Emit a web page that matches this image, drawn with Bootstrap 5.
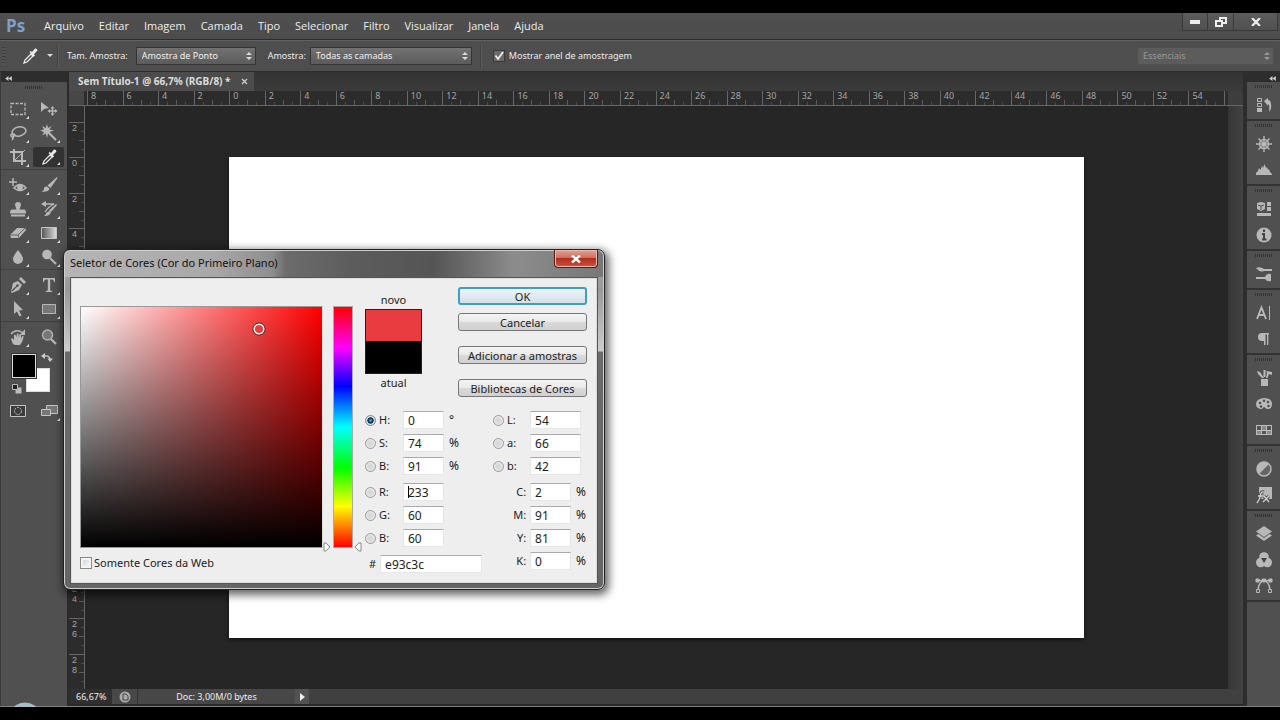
<!DOCTYPE html>
<html lang="pt-BR">
<head>
<meta charset="utf-8">
<meta name="viewport" content="width=device-width, initial-scale=1">
<title>Sem Título-1</title>
<link href="https://cdn.jsdelivr.net/npm/bootstrap@5.3.0/dist/css/bootstrap.min.css" rel="stylesheet">
<style>
body{background:#000;color:#dcdcdc;font:11px/14px "Noto Sans","Open Sans",sans-serif;padding:13px 0}
svg{display:block}
button,input,select{font:inherit;color:inherit}
.app{background:#4f4f4f;border-bottom:1px solid #808080}
.menus{height:27px;background:linear-gradient(#505050,#4c4c4c);border-bottom:1px solid #2c2c2c;padding-left:6px}
.logo-ps{color:#7d9fcc;font:bold 17px/22px "Open Sans",sans-serif;width:30px}
.menu-list{gap:15px}
.menu-link{color:#ececec;text-decoration:none;font:11px/16px "Open Sans",sans-serif}
.win-set{padding-right:2px}
.win-btn{background:linear-gradient(#5c5c5c,#505050);border:1px solid #3a3a3a;border-top:0;height:18px;width:26px;padding:0;display:grid;place-items:center}
.win-btn+.win-btn{border-left:0}
.win-btn.wide{width:44px}
.opts{height:32px;background:#4e4e4e;border-top:1px solid #626262;border-bottom:1px solid #2c2c2c;padding:0 6px 1px 2px;font-size:9px;color:#ececec}
.v-grip{width:3px;height:18px;background:repeating-linear-gradient(#3a3a3a 0 1px,#555 1px 3px)}
.v-line{width:2px;height:22px;background:#424242;border-right:1px solid #5a5a5a}
.drop{appearance:none;height:18px;border:1px solid #353535;border-radius:1px;padding:0 14px 0 5px;line-height:14px;color:#f0f0f0;background:url("data:image/svg+xml,%3Csvg xmlns='http://www.w3.org/2000/svg' width='6' height='10'%3E%3Cpath d='M3 1l3 3H0zM3 9l3-3H0z' fill='%23ddd'/%3E%3C/svg%3E") no-repeat right 3px center,linear-gradient(#727272,#5b5b5b)}
.drop-a{width:120px}.drop-b{width:162px}.drop-c{width:137px;color:#999;border-color:#505050;background:url("data:image/svg+xml,%3Csvg xmlns='http://www.w3.org/2000/svg' width='6' height='10'%3E%3Cpath d='M3 1l3 3H0zM3 9l3-3H0z' fill='%23999'/%3E%3C/svg%3E") no-repeat right 3px center,#5c5c5c}
.ring-check{appearance:none;width:12px;height:12px;margin:0 0 0 3px;border:1px solid #3a3a3a;background:#6a6a6a}
.ring-check:checked{background:url("data:image/svg+xml,%3Csvg xmlns='http://www.w3.org/2000/svg' viewBox='0 0 10 10'%3E%3Cpath d='M1.5 4.5L4 8l5-7' fill='none' stroke='%23eee' stroke-width='1.8'/%3E%3C/svg%3E"),#6a6a6a}
.tools{width:67px;border-left:1px solid #3a3a3a;background:#505050}
.dock-head{height:10px;background:#2d2d2d;color:#cfcfcf}
.h-grip{width:18px;height:3px;margin:0 auto;background:repeating-linear-gradient(90deg,#333 0 1px,#505050 1px 2px)}
.tool-grid{display:grid;grid-template-columns:1fr 1fr;padding:0 3px 0 1px;border-bottom:1px solid #414141;margin-bottom:3px}
.tool{position:relative;height:24px;padding:0;border:0;background:none;color:#b8b8b8;display:grid;place-items:center}
.tool.more::after{content:"";position:absolute;right:4px;bottom:2px;width:0;height:0;border-left:3px solid transparent;border-bottom:3px solid #ddd}
.tool.on{background:#323232;color:#e6e6e6;height:20px;align-self:center;border-radius:2px}
.swatches{position:relative;height:46px}
.sw{position:absolute;width:24px;height:24px;border:1px solid #ddd}
.sw-front{left:11px;top:1px;background:#000;outline:1px solid #333;z-index:1}
.sw-back{left:25px;top:15px;background:#fff}
.sw-swap{position:absolute;left:40px;top:0}.sw-reset{position:absolute;left:10px;top:30px}
.doc-wrap{border-left:2px solid #2a2a2a;border-right:4px solid #2d2d2d;background:#3a3a3a}
.doc-tabs{height:19px;background:linear-gradient(#333,#3b3b3b)}
.doc-tab{background:#4c4c4c;font:bold 10px/18px "Noto Sans",sans-serif;padding:0 6px 0 9px}
.tab-x{border:0;background:none;padding:0 0 0 2px}
.h-ruler,.v-ruler{background:#2c2c2c;color:#a6a6a6;font:9px/10px "Noto Sans",sans-serif}
.mark-cell{flex:1 1 0}
.h-ruler{height:15px;border-bottom:1px solid #666}
.h-ruler .corner{width:15px;background:#474747;margin-right:3px}
.h-ruler .mark-cell{border-left:1px solid #666;padding-left:3px;min-width:0;height:14px;background:linear-gradient(#5c5c5c,#5c5c5c) 17px 100%/1px 5px no-repeat,linear-gradient(#4c4c4c,#4c4c4c) 8px 100%/1px 3px no-repeat,linear-gradient(#4c4c4c,#4c4c4c) 26px 100%/1px 3px no-repeat}
.h-ruler .tail{width:4px;border-left:1px solid #666}
.h-end{width:15px;background:#3d3d3d}
.v-ruler{width:16px;padding-top:16px;border-right:1px solid #666;font-family:"Liberation Sans",sans-serif}
.v-ruler .mark-cell{border-top:1px solid #666;min-height:0;width:15px;padding-left:3px;overflow:hidden;background:linear-gradient(#5c5c5c,#5c5c5c) 100% 17px/5px 1px no-repeat,linear-gradient(#4c4c4c,#4c4c4c) 100% 8px/3px 1px no-repeat,linear-gradient(#4c4c4c,#4c4c4c) 100% 26px/3px 1px no-repeat}
.stage{background:#262626}
.artboard{background:#fff;width:855px;aspect-ratio:16/9;flex:none;box-shadow:0 2px 4px #0008}
.v-scroll{width:15px;background:linear-gradient(90deg,#363636,#434343)}
.status{height:15px;background:#404040;font-size:9px;line-height:16px;color:#ececec}
.status .zoom{width:43px;background:#2f2f2f;padding-left:7px}
.status .ico{width:25px;background:#484848}
.status .doc-size{width:158px;background:#474747;border-left:1px solid #333}
.status .arrow{width:14px;background:#525252}
.app-foot{height:2px;background:#2a2a2a}
.panels{width:33px;background:#505050}
.panel-set{padding:3px 0 1px;border-bottom:2px solid #333}
.panel-set .h-grip{margin-bottom:4px}
.panel-btn{display:grid;place-items:center;width:100%;height:26px;padding:0;border:0;background:none;color:#b8b8b8}
.app-orb{position:absolute;left:12px;bottom:13px;width:26px;height:5px;overflow:hidden}
/* floating colour picker window */
.picker{position:absolute;left:63px;top:249px;width:542px;color:#222;font-size:11px;border:1px solid #222;border-radius:7px;padding:0 6px 5px;box-shadow:inset 0 0 0 1px #cfcfcf,2px 3px 9px 2px #0009;background:linear-gradient(90deg,#b5b5b5 0,#a8a8a8 150px,#8e8e8e 208px,#6c6c6c 222px,#5c5c5c 290px,#555 370px,#666 395px,#8c8c8c 450px,#777 540px) 0 0/100% 27px no-repeat,linear-gradient(#a9a9a9 0,#999 40px,#ccc 101px,#6a6a6a 102px,#666)}
.picker-title{height:27px}
.picker-title h1{font:11px/25px "Noto Sans",sans-serif;margin:0;color:#111}
.picker-x{width:44px;height:18px;border:1px solid #5a1a14;border-top:0;border-radius:0 0 4px 4px;padding:0;background:linear-gradient(#e0a196 0,#d0705f 45%,#b32d1d 50%,#c95440);display:grid;place-items:center;box-shadow:inset 0 0 0 1px #e9b9b0}
.picker-body{background:#eee;border:1px solid #555;outline:1px solid #ddd;outline-offset:-2px;height:307px;padding:9px 10px 0 9px}
.plane{width:243px;height:242px;margin-top:19px;border:1px solid #999;border-right-color:#ddd;background:linear-gradient(transparent,#000),linear-gradient(90deg,#fff,#f00)}
.plane-dot{position:absolute;left:74%;top:9%;transform:translate(-50%,-50%)}
.hue{width:20px;height:242px;margin:19px 0 0 10px;border:1px solid #aaa;background:linear-gradient(#f00,#f0f 17%,#00f 33%,#0ff 50%,#0f0 67%,#ff0 83%,#f00)}
.hue-l,.hue-r{position:absolute;bottom:-5px}.hue-l{left:-11px}.hue-r{right:-10px}
.web{height:14px;margin-top:8px;gap:2px}
.box{appearance:none;width:12px;height:12px;margin:0;border:1px solid #8a8a8a;background:linear-gradient(135deg,#ccc,#fff);box-shadow:inset 0 0 0 2px #f4f4f4}
.dot{appearance:none;width:11px;height:11px;margin:0;border:1px solid #9b9b9b;border-radius:50%;background:radial-gradient(#d8d8d8 30%,#f4f4f4)}
.dot:checked{border-color:#789;background:radial-gradient(circle at 50% 50%,#5cc 0,#146 30%,#135 45%,#dde 55%)}
.right-pane{padding-left:12px}
.top-row{margin-bottom:14px}
.cap-line{line-height:18px}
.preview{width:57px;height:65px;border:1px solid #222;background:linear-gradient(#e93c40 50%,#000 50%)}
.act{width:129px;height:18px;padding:0;border:1px solid #777;border-radius:3px;background:linear-gradient(#f4f4f4,#e9e9e9 50%,#dadada 51%,#d0d0d0);line-height:15px}
.act.ok{border:2px solid #3c9fc4;line-height:13px;background:linear-gradient(#eef4f8,#d5e0e8)}
.acts{gap:15px}
.fields{font-size:12px}
.fields label{font-size:11px}
.col-r{margin-left:11px}
.lines{display:grid;gap:5px}
.line-l,.line-r{display:grid;height:18px;align-items:center}
.line-l{grid-template-columns:14px 24px 41px 1fr}
.line-r{grid-template-columns:14px 23px 51px}
.line-c{display:grid;height:18px;align-items:center;grid-template-columns:33px 41px 1fr;column-gap:4px}
.line-c .unit{padding-left:1px}
.val{width:100%;height:18px;min-width:0;border:1px solid #e6e6e6;border-top-color:#aaa;background:#fff;padding:0 0 0 4px;line-height:16px}
.val.caret{background:linear-gradient(#000,#000) 4px 2px/1px 12px no-repeat,#fff}
.unit{padding-left:5px}
.hex{height:18px;margin-top:8px;padding-left:4px}
.hex .val{width:102px}
</style>
</head>
<body class="vh-100 overflow-hidden">
<svg width="0" height="0" class="position-absolute">
<defs>
<symbol id="pip" viewBox="0 0 18 18"><path d="M3 16l1-3 6-6 2 2-6 6z" fill="none" stroke="currentColor" stroke-width="1.3"/><path d="M8.500 5l1-1 1.500 1L14 1.500q2-.5 2.500 2L13 7l1 1.500-1.200 1.200z" fill="currentColor"/></symbol>
<symbol id="back" viewBox="0 0 8 6"><path d="M4 0v6L0 3zM8 0v6L4 3z" fill="currentColor"/></symbol>
</defs>
</svg>

<main class="app h-100 d-flex flex-column">
<header class="menus d-flex align-items-center">
  <span class="logo-ps">Ps</span>
  <nav class="menu-list d-flex ps-2">
    <a class="menu-link" href="#">Arquivo</a><a class="menu-link" href="#">Editar</a><a class="menu-link" href="#">Imagem</a><a class="menu-link" href="#">Camada</a><a class="menu-link" href="#">Tipo</a><a class="menu-link" href="#">Selecionar</a><a class="menu-link" href="#">Filtro</a><a class="menu-link" href="#">Visualizar</a><a class="menu-link" href="#">Janela</a><a class="menu-link" href="#">Ajuda</a>
  </nav>
  <div class="win-set d-flex ms-auto align-self-start">
    <button class="win-btn" aria-label="Minimizar"><svg width="10" height="4"><path d="M0 0h10v4H0z" fill="#eee"/></svg></button>
    <button class="win-btn" aria-label="Restaurar"><svg width="12" height="10" fill="none" stroke="#eee" stroke-width="2"><path d="M5 3V1h6v5H8"/><path d="M1 4h6v5H1z"/></svg></button>
    <button class="win-btn wide" aria-label="Fechar"><svg width="10" height="8" stroke="#eee" stroke-width="2.200"><path d="M1 0l8 8M9 0L1 8"/></svg></button>
  </div>
</header>

<section class="opts d-flex align-items-center">
  <span class="v-grip"></span>
  <svg width="18" height="18" class="ms-3 flex-shrink-0"><use href="#pip"/></svg>
  <svg width="6" height="3" class="ms-2"><path d="M0 0h6L3 3z" fill="#ddd"/></svg>
  <span class="v-line ms-1"></span>
  <label for="size" class="ms-2 me-2">Tam. Amostra:</label>
  <select id="size" class="drop drop-a"><option>Amostra de Ponto</option></select>
  <label for="src" class="ms-2 me-1 ps-1">Amostra:</label>
  <select id="src" class="drop drop-b"><option>Todas as camadas</option></select>
  <span class="v-line ms-2 me-2"></span>
  <input type="checkbox" id="ring" class="ring-check" checked>
  <label for="ring" class="ms-1">Mostrar anel de amostragem</label>
  <select class="drop drop-c ms-auto" aria-label="Espaço de trabalho"><option>Essenciais</option></select>
</section>

<div class="d-flex flex-grow-1" style="min-height:0">
<aside class="tools flex-shrink-0">
  <div class="dock-head ps-1 pt-1"><svg width="7" height="5"><use href="#back"/></svg></div>
  <div class="pt-1 pb-2"><div class="h-grip"></div></div>
  <div class="tool-grid">
    <button class="tool more" aria-label="Letreiro"><svg width="18" height="18"><path d="M2 3.500h14v11H2z" fill="none" stroke="currentColor" stroke-width="1.300" stroke-dasharray="3 1.500"/></svg></button>
    <button class="tool" aria-label="Mover"><svg width="18" height="18" fill="currentColor"><path d="M1 2l8 6-5 1-3 3z"/><path d="M12.500 6l2 2.500h-1.300v1.800H15V9l2.500 2L15 13v-1.300h-1.800v1.800h1.300l-2 2.500-2-2.500h1.300v-1.800H10V13l-2.500-2L10 9v1.300h1.800V8.500h-1.300z"/></svg></button>
    <button class="tool more" aria-label="Laço"><svg width="18" height="18" fill="none" stroke="currentColor" stroke-width="1.500"><ellipse cx="10" cy="7.500" rx="7" ry="4.500" transform="rotate(-12 10 7.500)"/><path d="M4 10q-3 0-2 2t3 0-1-2q1 4-1 6"/></svg></button>
    <button class="tool more" aria-label="Varinha mágica"><svg width="18" height="18"><path d="M7 0l1 4 3.500-2L9.500 5.500 14 6.500 9.500 8l2 3.500L8 9.500 7 14 5.700 9.500 2 11.500 4 8 0 6.500l4-1L2 2l3.700 2z" fill="currentColor"/><path d="M9 9l7 7" stroke="currentColor" stroke-width="2.200"/></svg></button>
    <button class="tool more" aria-label="Corte"><svg width="18" height="18" fill="none" stroke="currentColor" stroke-width="2"><path d="M5 1v12h12M1 4h12v13"/><path d="M6 12L16 2" stroke-width="1"/></svg></button>
    <button class="tool more on" aria-label="Conta-gotas"><svg width="18" height="18"><use href="#pip"/></svg></button>
  </div>
  <div class="tool-grid">
    <button class="tool more" aria-label="Recuperação"><svg width="20" height="18" fill="none" stroke="currentColor" stroke-width="1.500"><path d="M5 2v8M1 6h8M6 12q6-7 12 0-6 5-12 0z"/><circle cx="12" cy="11.500" r="2.200" fill="currentColor"/></svg></button>
    <button class="tool more" aria-label="Pincel"><svg width="18" height="18" fill="currentColor"><path d="M17 1l.5 1-7 10-3-2.500z"/><path d="M7 10.500l2.500 2q-1 4-8.500 3 3-.5 3-3t3-2z"/></svg></button>
    <button class="tool more" aria-label="Carimbo"><svg width="18" height="18" fill="currentColor"><path d="M9 2q3 0 3 3l-1.500 4.500H15q2 0 2 4H1q0-4 2-4h4.500L6 5q0-3 3-3zM2 14.500h14v2H2z"/></svg></button>
    <button class="tool more" aria-label="Pincel do histórico"><svg width="18" height="18" fill="currentColor"><path d="M16 4l1 1-6 7-2-1.500zM9 11l2 1.500q-2 4-7 3.500 2-1 2-3z"/><path d="M5 4h9q-6 3-9 8" fill="none" stroke="currentColor" stroke-width="1.300"/><path d="M1 4l5-3v6z"/></svg></button>
    <button class="tool more" aria-label="Borracha"><svg width="18" height="18"><path d="M1 11L8 4h8l1 2-7 8H2z" fill="currentColor"/><path d="M1 11h8l7-7M9 11l1 3" stroke="#666" fill="none"/></svg></button>
    <button class="tool more" aria-label="Degradê"><svg width="18" height="18"><defs><linearGradient id="gr"><stop stop-color="#555"/><stop offset="1" stop-color="#ddd"/></linearGradient></defs><path d="M1.500 3.500h15v11h-15z" fill="url(#gr)" stroke="#c4c4c4"/></svg></button>
    <button class="tool more" aria-label="Desfoque"><svg width="18" height="18"><path d="M9 2q5 6 5 9a5 5 0 0 1-10 0q0-3 5-9z" fill="currentColor"/></svg></button>
    <button class="tool more" aria-label="Subexposição"><svg width="18" height="18"><circle cx="7" cy="6.500" r="4.800" fill="currentColor"/><path d="M10 10l6 6" stroke="currentColor" stroke-width="2"/></svg></button>
  </div>
  <div class="tool-grid">
    <button class="tool more" aria-label="Caneta"><svg width="18" height="18" fill="currentColor"><path d="M2 16l2-9 5-2 4 4-3 5-7 3z"/><path d="M10 3l2-2 5 5-2 2z"/><path d="M3 15l5-5" stroke="#505050" stroke-width="1.200"/><circle cx="8.500" cy="9.500" r="1.300" fill="#505050"/></svg></button>
    <button class="tool more" aria-label="Texto"><svg width="18" height="18"><path d="M3 2h12v4h-1q0-2.500-2-2.500h-1.800V14q0 1 2 1v1H5.800v-1q2 0 2-1V3.500H6Q4 3.500 4 6H3z" fill="currentColor"/></svg></button>
    <button class="tool more" aria-label="Seleção de demarcador"><svg width="18" height="18"><path d="M5 1l9 9-4 .5 2.500 5-2 1L8 11.500 5 14z" fill="currentColor"/></svg></button>
    <button class="tool more" aria-label="Retângulo"><svg width="18" height="18"><path d="M2.500 4.500h13v9h-13z" fill="#777" stroke="#b8b8b8"/></svg></button>
  </div>
  <div class="tool-grid border-0 mb-0">
    <button class="tool more" aria-label="Mão"><svg width="18" height="18" fill="currentColor"><path d="M4 16l-2-5 1-1 2 2V7l1.500-.5.8 3L8 5.500h1.500l.2 4 1-3.500 1.500.5-.3 4 1.500-2.500 1.400.5L13 14l-2 3H6z"/><path d="M2 6q5-6 12-1" fill="none" stroke="currentColor" stroke-width="1.500"/><path d="M16 1v6h-5z"/></svg></button>
    <button class="tool" aria-label="Zoom"><svg width="18" height="18"><circle cx="7.500" cy="7" r="5" fill="#777" stroke="#b0b0b0" stroke-width="1.500"/><path d="M11 11l5 5" stroke="currentColor" stroke-width="2.200"/></svg></button>
  </div>
  <div class="swatches mt-1">
    <span class="sw sw-front"></span><span class="sw sw-back"></span>
    <svg class="sw-swap" width="12" height="10"><path d="M3 3q5-1 6 3" fill="none" stroke="#ccc" stroke-width="1.300"/><path d="M0 3l4-3v6zM9 9L6.500 5.500H12z" fill="#ccc"/></svg>
    <svg class="sw-reset" width="12" height="12"><path d="M4.500 4.500h6v6h-6z" fill="#bbb"/><path d="M1.500 1.500h5v5h-5z" fill="#222" stroke="#bbb"/></svg>
  </div>
  <div class="tool-grid border-0">
    <button class="tool" aria-label="Máscara rápida"><svg width="18" height="14" fill="none" stroke="#c4c4c4"><path d="M1.500 1.500h15v11h-15z" fill="#3c3c3c"/><circle cx="9" cy="7" r="3.500" stroke-dasharray="2 1"/></svg></button>
    <button class="tool more" aria-label="Modo de tela"><svg width="18" height="16" fill="#777" stroke="#c4c4c4"><path d="M6.500 2.500h11v8h-11z"/><path d="M1.500 6.500h9v6h-9z"/></svg></button>
  </div>
</aside>

<section class="doc-wrap flex-grow-1 d-flex flex-column" style="min-width:0">
  <div class="doc-tabs d-flex">
    <div class="doc-tab d-flex gap-2"><span>Sem Título-1 @ 66,7% (RGB/8) *</span><button class="tab-x" aria-label="Fechar guia"><svg width="7" height="7" stroke="#ccc" stroke-width="1.300"><path d="M1 1l5 5M6 1L1 6"/></svg></button></div>
  </div>
  <div class="h-ruler d-flex" id="hr"><span class="corner"></span></div>
  <div class="d-flex flex-grow-1" style="min-height:0">
    <div class="v-ruler d-flex flex-column" id="vr"></div>
    <div class="stage flex-grow-1 d-flex align-items-center justify-content-center overflow-hidden"><div class="artboard"></div></div>
    <div class="v-scroll"></div>
  </div>
  <footer class="status d-flex">
    <span class="zoom">66,67%</span>
    <span class="ico d-grid" style="place-items:center"><svg width="12" height="12"><circle cx="6" cy="6" r="5.500" fill="#aaa"/><path d="M4 3h3l2 2v4H4z" fill="none" stroke="#444"/></svg></span>
    <span class="doc-size text-center">Doc: 3,00M/0 bytes</span>
    <span class="arrow d-grid" style="place-items:center"><svg width="5" height="8"><path d="M0 0l5 4-5 4z" fill="#eee"/></svg></span>
  </footer>
  <div class="app-foot"></div>
</section>

<aside class="panels flex-shrink-0">
  <div class="dock-head d-flex justify-content-end pe-1 pt-1"><svg width="7" height="5"><use href="#back"/></svg></div>
  <div class="panel-set"><div class="h-grip"></div>
    <button class="panel-btn" aria-label="Histórico"><svg width="18" height="18" fill="currentColor"><path d="M2.500 2.500h4v3h-4zM2.500 7.500h4v3h-4z" fill="none" stroke="currentColor"/><path d="M2 12h5v4H2zM9 5l4-3v2q4 0 3 9l-2 3q1-8-1-8v2z"/></svg></button></div>
  <div class="panel-set"><div class="h-grip"></div>
    <button class="panel-btn" aria-label="Navegador"><svg width="18" height="18" fill="none" stroke="currentColor" stroke-width="1.400"><circle cx="9" cy="9" r="4.500"/><circle cx="9" cy="9" r="1.500"/><path d="M9 1v16M1 9h16M3.500 3.500l11 11M14.500 3.500l-11 11"/></svg></button>
    <button class="panel-btn" aria-label="Histograma"><svg width="18" height="18"><path d="M1 14v-2l2-2 1-3 1.500 2L7 5l1 2 1.500-4L11 7l1-1 1 3 1-1 1 3 2 2v1z" fill="currentColor"/></svg></button></div>
  <div class="panel-set"><div class="h-grip"></div>
    <button class="panel-btn" aria-label="Estilos"><svg width="18" height="18" fill="currentColor"><path d="M2 3l4-1 4 1v6l-4 2-4-2zM12 2h4v4h-4zM12 7h4v4h-4zM2 13h14v3H2z"/><path d="M3 5l3 1 3-1M6 6v4" stroke="#505050" fill="none"/></svg></button>
    <button class="panel-btn" aria-label="Informações"><svg width="18" height="18"><circle cx="9" cy="9" r="7.500" fill="currentColor"/><path d="M9 3.500v2.500M7 8h2v5M7 13.500h4.500" stroke="#444" stroke-width="2" fill="none"/></svg></button></div>
  <div class="panel-set"><div class="h-grip"></div>
    <button class="panel-btn" aria-label="Pincéis"><svg width="18" height="18" fill="currentColor"><path d="M1 3q4-2 8 1h8v2H9Q5 8 1 3zM1 12h9q2-4 6-3v7q-4 1-6-2H1z"/></svg></button></div>
  <div class="panel-set"><div class="h-grip"></div>
    <button class="panel-btn" aria-label="Caractere"><svg width="18" height="18" fill="none" stroke="currentColor"><path d="M2 15L6.500 3.500 11 15M3.500 11h6" stroke-width="1.900"/><path d="M14.500 2v14"/></svg></button>
    <button class="panel-btn" aria-label="Parágrafo"><svg width="18" height="18"><path d="M14 3H7a4 4 0 0 0 0 8h2v4h1.500V4.500h1.500V15h1.300V4.500H14z" fill="currentColor"/></svg></button></div>
  <div class="panel-set"><div class="h-grip"></div>
    <button class="panel-btn" aria-label="Predefinições"><svg width="18" height="18" fill="currentColor"><path d="M6 10h7v7H6zM7 9L3 5l-1-3 3 1 4 6zM8.500 8V1h2v7zM11 9l1-5-1-2 6 1v3l-3-1-1.500 4z"/></svg></button>
    <button class="panel-btn" aria-label="Cor"><svg width="18" height="18"><path d="M9 3q8 0 8 6 0 5-4 5-2 0-3-1.500T7 14q-6 0-6-5t8-6z" fill="currentColor"/><g fill="#505050"><circle cx="5" cy="8" r="1.300"/><circle cx="9" cy="5.800" r="1.300"/><circle cx="13" cy="7" r="1.300"/><circle cx="13.500" cy="11" r="1.300"/><circle cx="6" cy="11.500" r="1.300"/></g></svg></button>
    <button class="panel-btn" aria-label="Amostras"><svg width="18" height="18"><path d="M1 4h16v10H1z" fill="#bbb"/><path d="M2 5h4v4H2zM12 5h4v4h-4zM7 10h4v3H7z" fill="#555"/><path d="M7 5h4v4H7zM2 10h4v3H2zM12 10h4v3h-4z" fill="#8a8a8a"/></svg></button></div>
  <div class="panel-set"><div class="h-grip"></div>
    <button class="panel-btn" aria-label="Ajustes"><svg width="18" height="18"><circle cx="9" cy="9" r="7" fill="#666" stroke="currentColor" stroke-width="1.500"/><path d="M4 14A7 7 0 0 1 14 4z" fill="currentColor"/></svg></button>
    <button class="panel-btn" aria-label="Efeitos"><svg width="18" height="18"><path d="M4 1h13v12h-3l-3-3-3 3H4z" fill="currentColor"/><path d="M9 6q-3-1-3.500 3T2 17M3 10h6M9 10l5 6M14 10l-6 6" fill="none" stroke="#505050" stroke-width="3"/><path d="M9 6q-3-1-3.500 3T2 17M3 10h6M9 10l5 6M14 10l-6 6" fill="none" stroke="#d0d0d0" stroke-width="1.300"/></svg></button></div>
  <div class="panel-set"><div class="h-grip"></div>
    <button class="panel-btn" aria-label="Camadas"><svg width="18" height="18" fill="currentColor"><path d="M9 1l8 5.500L9 12 1 6.500z"/><path d="M1 10.500L3.500 9 9 13l5.500-4 2.500 1.500L9 16z"/></svg></button>
    <button class="panel-btn" aria-label="Canais"><svg width="18" height="18" fill="currentColor"><circle cx="9" cy="6" r="4.800"/><circle cx="5.800" cy="11.500" r="4.800"/><circle cx="12.200" cy="11.500" r="4.800"/><path d="M6 7h6l-3 5z" fill="#444"/></svg></button>
    <button class="panel-btn" aria-label="Demarcadores"><svg width="18" height="18" fill="none" stroke="currentColor"><path d="M3 13Q4 4 9 4t6 9M2 3.500h14" stroke-width="1.400"/><path d="M1 2h3v3H1zM7.500 2h3v3h-3zM14 2h3v3h-3z" fill="currentColor"/><path d="M1.500 12.500h3v3h-3zM13.500 12.500h3v3h-3z" fill="#505050"/></svg></button></div>
</aside>
</div>
</main>

<svg class="app-orb" viewBox="0 0 26 5"><ellipse cx="13" cy="10" rx="13" ry="9.500" fill="#a9bdc9"/></svg>

<form class="picker" role="dialog" aria-labelledby="pt" onsubmit="return false">
  <div class="picker-title d-flex justify-content-between"><h1 id="pt">Seletor de Cores (Cor do Primeiro Plano)</h1>
    <button type="button" class="picker-x" aria-label="Fechar"><svg width="10" height="8" stroke="#fff" stroke-width="2.400"><path d="M1 .5l8 7M9 .5l-8 7"/></svg></button></div>
  <div class="picker-body d-flex">
    <div>
      <div class="d-flex">
        <div class="plane position-relative"><svg class="plane-dot" width="14" height="14" fill="none"><circle cx="7" cy="7" r="6" stroke="#222"/><circle cx="7" cy="7" r="4.800" stroke="#fff" stroke-width="1.500"/></svg></div>
        <div class="hue position-relative">
          <svg class="hue-l" width="8" height="10"><path d="M1 1h2l4 4-4 4H1z" fill="#fff" stroke="#888"/></svg>
          <svg class="hue-r" width="8" height="10"><path d="M7 1H5L1 5l4 4h2z" fill="#fff" stroke="#888"/></svg>
        </div>
      </div>
      <div class="web d-flex align-items-center"><input type="checkbox" class="box" id="web"><label for="web">Somente Cores da Web</label></div>
    </div>
    <div class="right-pane flex-grow-1">
      <div class="top-row d-flex justify-content-between">
        <div class="text-center pt-1"><div class="cap-line">novo</div><div class="preview"></div><div class="cap-line">atual</div></div>
        <div class="acts d-flex flex-column">
          <div class="d-flex flex-column gap-2"><button class="act ok">OK</button><button type="button" class="act">Cancelar</button></div>
          <button type="button" class="act">Adicionar a amostras</button>
          <button type="button" class="act">Bibliotecas de Cores</button>
        </div>
      </div>
      <div class="fields d-flex">
        <div>
          <div class="lines mb-2">
            <div class="line-l"><input class="dot" type="radio" name="m" id="mh" checked><label for="mh">H:</label><input class="val" aria-label="H" value="0"><span class="unit">°</span></div>
            <div class="line-l"><input class="dot" type="radio" name="m" id="ms"><label for="ms">S:</label><input class="val" aria-label="S" value="74"><span class="unit">%</span></div>
            <div class="line-l"><input class="dot" type="radio" name="m" id="mb"><label for="mb">B:</label><input class="val" aria-label="B" value="91"><span class="unit">%</span></div>
          </div>
          <div class="lines">
            <div class="line-l"><input class="dot" type="radio" name="m" id="mr"><label for="mr">R:</label><input class="val caret" aria-label="R" value="233"></div>
            <div class="line-l"><input class="dot" type="radio" name="m" id="mg"><label for="mg">G:</label><input class="val" aria-label="G" value="60"></div>
            <div class="line-l"><input class="dot" type="radio" name="m" id="mbl"><label for="mbl">B:</label><input class="val" aria-label="Azul" value="60"></div>
          </div>
          <div class="hex d-flex align-items-center gap-1"><label for="hx">#</label><input class="val" id="hx" value="e93c3c"></div>
        </div>
        <div class="col-r">
          <div class="lines mb-2">
            <div class="line-r"><input class="dot" type="radio" name="m" id="ml"><label for="ml">L:</label><input class="val" aria-label="L" value="54"></div>
            <div class="line-r"><input class="dot" type="radio" name="m" id="ma"><label for="ma">a:</label><input class="val" aria-label="a" value="66"></div>
            <div class="line-r"><input class="dot" type="radio" name="m" id="mlb"><label for="mlb">b:</label><input class="val" aria-label="b" value="42"></div>
          </div>
          <div class="lines">
            <div class="line-c"><label for="cc" class="text-end">C:</label><input class="val" id="cc" value="2"><span class="unit">%</span></div>
            <div class="line-c"><label for="cm" class="text-end">M:</label><input class="val" id="cm" value="91"><span class="unit">%</span></div>
            <div class="line-c"><label for="cy" class="text-end">Y:</label><input class="val" id="cy" value="81"><span class="unit">%</span></div>
            <div class="line-c"><label for="ck" class="text-end">K:</label><input class="val" id="ck" value="0"><span class="unit">%</span></div>
          </div>
        </div>
      </div>
    </div>
  </div>
</form>

<script src="https://cdn.jsdelivr.net/npm/bootstrap@5.3.0/dist/js/bootstrap.bundle.min.js"></script>
<script>
// Ruler marks: one cell every two units, before and after the origin
const cell = t => `<span class="mark-cell">${t}</span>`;
let h = '';
for (let n = -8; n <= 54; n += 2) h += cell(Math.abs(n));
document.getElementById('hr').insertAdjacentHTML('beforeend', h + '<span class="tail"></span><span class="h-end"></span>');
let v = '';
for (let n = -2; n <= 28; n += 2) v += cell(n > 4 && n < 24 ? '' : String(Math.abs(n)).split('').join('<br>'));
document.getElementById('vr').innerHTML = v;
</script>
</body>
</html>
